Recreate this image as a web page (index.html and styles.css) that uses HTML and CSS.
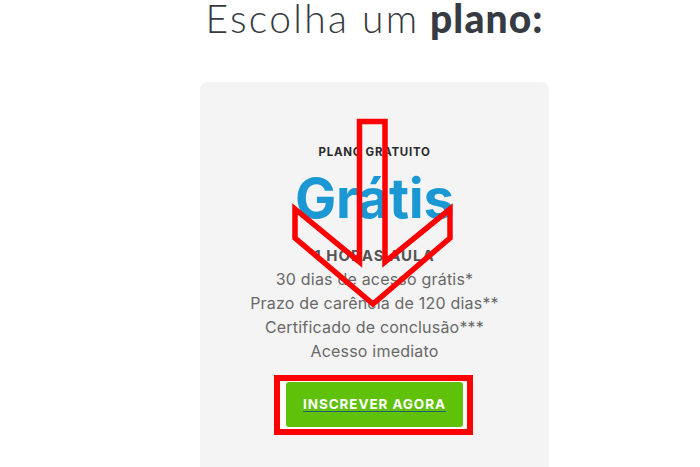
FILE: index.html
```html
<!DOCTYPE html>
<html lang="pt">
<head>
<meta charset="utf-8">
<title>Escolha um plano</title>
<link rel="stylesheet" href="styles.css">
</head>
<body>
<div class="page">
  <h1 class="title"><span class="light">Escolha um</span> <span class="heavy">plano:</span></h1>
  <div class="card">
    <div class="plan-name">PLANO GRATUITO</div>
    <div class="price">Grátis</div>
    <div class="hours">1 HORAS AULA</div>
    <ul class="features">
      <li>30 dias de acesso grátis*</li>
      <li>Prazo de carência de 120 dias**</li>
      <li>Certificado de conclusão***</li>
      <li>Acesso imediato</li>
    </ul>
    <div class="cta-wrap">
      <span class="highlight"><a class="cta" href="#">INSCREVER AGORA</a></span>
    </div>
  </div>
</div>
<svg class="overlay" width="700" height="467" viewBox="0 0 700 467" xmlns="http://www.w3.org/2000/svg">
  <polygon points="359.5,121.5 359.5,262 295,209 295,238 373,304 450,238 450,209 385,262 385,121.5" fill="none" stroke="#f00" stroke-width="5.5" stroke-linejoin="miter"/>
</svg>
</body>
</html>
```
FILE: styles.css
```css
html, body {
  margin: 0;
  padding: 0;
  background: #ffffff;
}
.page {
  width: 349px;
  margin-left: 200px;
  text-align: center;
}
.title {
  margin: 0;
  height: 82px;
  font-family: Lato, "Liberation Sans", sans-serif;
  font-size: 39px;
  line-height: 36px;
  color: #363a42;
  font-weight: 300;
  white-space: nowrap;
}
.title .light { font-weight: 300; letter-spacing: 2.3px; }
.title .heavy { font-weight: 900; letter-spacing: 1.1px; }
.card {
  background: #f4f4f4;
  border-radius: 8px 8px 0 0;
  padding-top: 62px;
  height: 323px;
  font-family: Inter, "Noto Sans", sans-serif;
}
.plan-name {
  font-size: 11.5px;
  font-weight: 700;
  color: #2b2b2b;
  line-height: 16px;
  letter-spacing: 0.7px;
}
.price {
  font-size: 55px;
  font-weight: 700;
  color: #1b98d3;
  line-height: 60px;
  margin-top: 8px;
  letter-spacing: -0.3px;
}
.hours {
  margin-top: 19px;
  font-size: 15px;
  font-weight: 700;
  color: #555555;
  line-height: 18px;
  letter-spacing: 1px;
}
.features {
  list-style: none;
  margin: 2px 0 0;
  padding: 0;
}
.features li {
  font-size: 16px;
  line-height: 24px;
  color: #686868;
  font-weight: 400;
  letter-spacing: 0.2px;
}
.cta-wrap {
  margin-top: 12px;
}
.highlight {
  display: inline-block;
  border: 6px solid #f00;
  background: #ffffff;
  padding: 1px 4px 2px 6px;
  margin-left: -2px;
}
.cta {
  display: block;
  width: 177px;
  height: 45px;
  line-height: 45px;
  background: #5fc10a;
  border-radius: 3px;
  color: #ffffff;
  font-size: 13.5px;
  font-weight: 700;
  letter-spacing: 0.9px;
  text-decoration: underline;
  text-decoration-color: #245f6e;
  text-underline-offset: 2px;
}
.overlay {
  position: absolute;
  top: 0;
  left: 0;
  pointer-events: none;
}
```
